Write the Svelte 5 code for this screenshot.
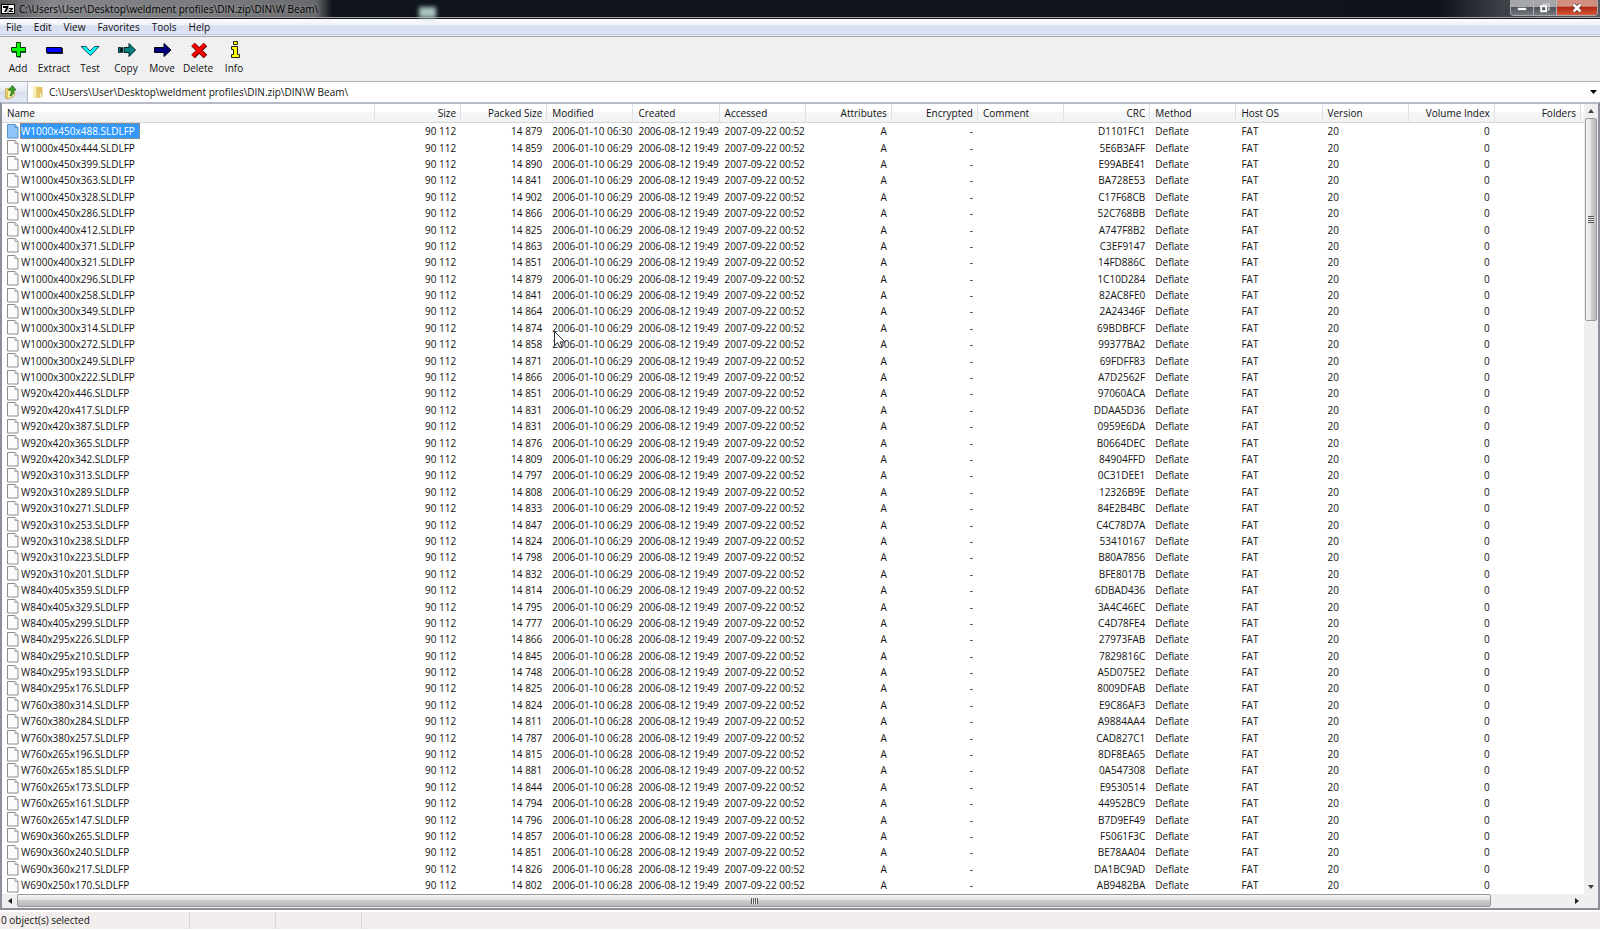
<script>
  const path = 'C:\\Users\\User\\Desktop\\weldment profiles\\DIN.zip\\DIN\\W Beam\\';
  const menus = ['File', 'Edit', 'View', 'Favorites', 'Tools', 'Help'];
  const tools = ['Add', 'Extract', 'Test', 'Copy', 'Move', 'Delete', 'Info'];

  const columns = [
    { label: 'Name' },
    { label: 'Size', right: true },
    { label: 'Packed Size', right: true },
    { label: 'Modified' },
    { label: 'Created' },
    { label: 'Accessed' },
    { label: 'Attributes', right: true },
    { label: 'Encrypted', right: true },
    { label: 'Comment' },
    { label: 'CRC', right: true },
    { label: 'Method' },
    { label: 'Host OS' },
    { label: 'Version' },
    { label: 'Volume Index', right: true },
    { label: 'Folders', right: true }
  ];

  // name | packed size | modified minute | CRC
  const files = `1000x450x488 879 30 D1101FC1
1000x450x444 859 29 5E6B3AFF
1000x450x399 890 29 E99ABE41
1000x450x363 841 29 BA728E53
1000x450x328 902 29 C17F68CB
1000x450x286 866 29 52C768BB
1000x400x412 825 29 A747F8B2
1000x400x371 863 29 C3EF9147
1000x400x321 851 29 14FD886C
1000x400x296 879 29 1C10D284
1000x400x258 841 29 82AC8FE0
1000x300x349 864 29 2A24346F
1000x300x314 874 29 69BDBFCF
1000x300x272 858 29 99377BA2
1000x300x249 871 29 69FDFF83
1000x300x222 866 29 A7D2562F
920x420x446 851 29 97060ACA
920x420x417 831 29 DDAA5D36
920x420x387 831 29 0959E6DA
920x420x365 876 29 B0664DEC
920x420x342 809 29 84904FFD
920x310x313 797 29 0C31DEE1
920x310x289 808 29 12326B9E
920x310x271 833 29 84E2B4BC
920x310x253 847 29 C4C78D7A
920x310x238 824 29 53410167
920x310x223 798 29 B80A7856
920x310x201 832 29 BFE8017B
840x405x359 814 29 6DBAD436
840x405x329 795 29 3A4C46EC
840x405x299 777 29 C4D78FE4
840x295x226 866 28 27973FAB
840x295x210 845 28 7829816C
840x295x193 748 28 A5D075E2
840x295x176 825 28 8009DFAB
760x380x314 824 28 E9C86AF3
760x380x284 811 28 A9884AA4
760x380x257 787 28 CAD827C1
760x265x196 815 28 8DF8EA65
760x265x185 881 28 0A547308
760x265x173 844 28 E9530514
760x265x161 794 28 44952BC9
760x265x147 796 28 B7D9EF49
690x360x265 857 28 F5061F3C
690x360x240 851 28 BE78AA04
690x360x217 826 28 DA1BC9AD
690x250x170 802 28 AB9482BA`
    .split('\n')
    .map((line) => {
      const [name, packed, minute, crc] = line.trim().split(' ');
      return [
        `W${name}.SLDLFP`, '90 112', `14 ${packed}`, `2006-01-10 06:${minute}`,
        '2006-08-12 19:49', '2007-09-22 00:52', 'A', '-', '', crc, 'Deflate', 'FAT', '20', '0', ''
      ];
    });
</script>

<div class="window">
  <header class="title">
    <svg class="logo" width="14" height="10" viewBox="0 0 14 10" aria-hidden="true">
      <rect width="14" height="10" fill="#000" /><rect x="1" y="1" width="12" height="8" fill="#fff" />
      <path d="M2 2h5v2l-2 4H3l2-4H2z" fill="#000" /><path d="M8 4h4v1l-2 2h2v1H8V7l2-2H8z" fill="#000" />
      <path d="M7 1v8" stroke="#000" stroke-width="0.6" />
    </svg>
    <h1>{path}</h1>
    <span class="spot"></span>
    <div class="controls">
      <button class="min" aria-label="Minimize">
        <svg width="12" height="10" viewBox="0 0 12 10"><rect x="1.5" y="4.5" width="9" height="3" fill="#fff" stroke="#555a66" stroke-width=".7" /></svg>
      </button>
      <button class="restore" aria-label="Restore">
        <svg width="12" height="10" viewBox="0 0 12 10"><path d="M4.500 2V1H10V7H9" fill="none" stroke="#d5d8dd" stroke-width="1.200" /><rect x="2.200" y="3.200" width="5" height="5" fill="#50545c" stroke="#fff" stroke-width="2" /></svg>
      </button>
      <button class="close" aria-label="Close">
        <svg width="12" height="10" viewBox="0 0 12 10"><path d="M2.500 1.500l7 7M9.500 1.500l-7 7" stroke="#5c2a25" stroke-width="4" /><path d="M2.500 1.500l7 7M9.500 1.500l-7 7" stroke="#fff" stroke-width="2.500" /></svg>
      </button>
    </div>
  </header>

  <nav class="menu">
    {#each menus as m}<button>{m}</button>{/each}
  </nav>

  <div class="toolbar">
    {#each tools as t}
      <button>
        <svg width="22" height="18" viewBox="0 0 22 18" aria-hidden="true">
          {#if t === 'Add'}
            <path d="M10 2.500h4V7h5v5h-5v4.500h-4V12H5V7h5z" fill="#063" /><path d="M9.500 1.500h4V6.500h5v4h-5v5h-4v-5h-5v-4h5z" fill="#0f0" stroke="#043804" />
          {:else if t === 'Extract'}
            <path d="M4 7h16v6H4z" fill="#223" /><path d="M3.500 6.500h15v5h-15z" fill="#00f" stroke="#001" />
          {:else if t === 'Test'}
            <path d="M2 5.500h5L11 10l4.500-4.500H20L11.500 14.500z" fill="#0ff" stroke="#134" stroke-width=".9" />
          {:else if t === 'Copy'}
            <path d="M3.500 6.500h2v5h-2zM6.500 6.500h1v5h-1zM9 6.500h5v-4l6.500 6.500-6.500 6.500v-4H9z" fill="#088080" stroke="#022" />
          {:else if t === 'Move'}
            <path d="M3.500 6.500H13v-4l7 6.500-7 6.500v-4H3.500z" fill="#000080" stroke="#001" />
          {:else if t === 'Delete'}
            <path d="M6 3.500L18.500 15.500M18.500 3.500L6 15.500" stroke="#400" stroke-width="5" /><path d="M6 3.500L18 15M18 3.500L6 15" stroke="#f00" stroke-width="3.600" />
          {:else}
            <path d="M10.500.5h4v3h-4zM8.500 5.500h6v8h2v3h-8v-3h2v-5h-2z" fill="#ff0" stroke="#221" />
          {/if}
        </svg>
        <span>{t}</span>
      </button>
    {/each}
  </div>

  <div class="address">
    <button class="up" aria-label="Up one level">
      <svg width="14" height="16" viewBox="0 0 14 16">
        <path d="M1.500 5l3-1 1 1 3-1v9l-5 2-2-1z" fill="#f3d978" stroke="#b99a3c" stroke-width=".8" />
        <path d="M3.500 7l7-2v7l-7 3z" fill="#fdf0a8" stroke="#c7a646" stroke-width=".7" />
        <path d="M6 12c4-1 4-4 3.500-6H12L8.500 1.500 4.500 6h2.500c.5 2 0 4-1 6z" fill="#3aa52e" stroke="#1c6d17" stroke-width=".8" />
      </svg>
    </button>
    <svg class="folder" width="12" height="14" viewBox="0 0 12 14" aria-hidden="true">
      <path d="M1 1h5l1 1v11H1z" fill="#f7e39b" /><path d="M6 2h4.500v10L6 13z" fill="#e5c25c" />
      <path d="M1 1h3.500v11L1 13z" fill="#fbeeb9" /><path d="M5 2.500v10" stroke="#cfa94a" stroke-width=".8" /><path d="M8.500 8v4.500" stroke="#f7f1d8" stroke-width="1.500" />
    </svg>
    <input aria-label="Path" value={path} />
    <button class="drop" aria-label="Path history"><svg width="7" height="4" viewBox="0 0 7 4"><path d="M0 0h7L3.500 4z" fill="#000" /></svg></button>
  </div>

  <main class="list">
    <div class="rows">
      <table>
        <colgroup>
          <col class="c-name" />
          {#each columns.slice(1) as _}<col />{/each}
          <col class="c-end" />
        </colgroup>
        <thead>
          <tr>
            {#each columns as c}<th class:right={c.right}>{c.label}</th>{/each}
            <td></td>
          </tr>
        </thead>
        <tbody>
          {#each files as f, i}
            <tr class:selected={i === 0}>
              {#each f as v, j}
                {#if j === 0}
                  <td class="name">
                    <div>
                      <svg width="12" height="15" viewBox="0 0 12 15" aria-hidden="true">
                        <path class="sheet" d="M.5.5h7.500l3 3V14H.5z" /><path class="fold" d="M8 .5v3h3" />
                      </svg>
                      <span>{v}</span>
                    </div>
                  </td>
                {:else}
                  <td class:right={columns[j].right}>{v}</td>
                {/if}
              {/each}
              <td></td>
            </tr>
          {/each}
        </tbody>
      </table>
    </div>

    <div class="vscroll">
      <button aria-label="Scroll up"><svg width="6" height="4" viewBox="0 0 6 4"><path d="M0 4h6L3 0z" fill="#444" /></svg></button>
      <div class="track"><div class="thumb"><i></i></div></div>
      <button aria-label="Scroll down"><svg width="6" height="4" viewBox="0 0 6 4"><path d="M0 0h6L3 4z" fill="#444" /></svg></button>
    </div>
    <div class="hscroll">
      <button aria-label="Scroll left"><svg width="4" height="6" viewBox="0 0 4 6"><path d="M4 0v6L0 3z" fill="#222" /></svg></button>
      <div class="track"><div class="thumb"><i></i></div></div>
      <button aria-label="Scroll right"><svg width="4" height="6" viewBox="0 0 4 6"><path d="M0 0v6L4 3z" fill="#222" /></svg></button>
    </div>
    <div class="corner"></div>
  </main>

  <footer class="status">
    <span class="wide">0 object(s) selected</span><span></span><span></span>
  </footer>

  <svg class="cursor" width="12" height="18" viewBox="0 0 12 18" aria-hidden="true">
    <path d="M.5.5v14l3-3 2.500 5 2-1-2-4.500H11z" fill="#fff" stroke="#333" />
  </svg>
</div>

<style>
  :global(body) { margin: 0; background: #fff; }
  * { box-sizing: border-box; }
  .window {
    position: relative;
    display: flex;
    flex-direction: column;
    height: 100vh;
    padding-bottom: 1px;
    overflow: hidden;
    background: #fff;
    color: #111;
    font: 10px/16px "Open Sans", "Noto Sans", sans-serif;
  }
  button { margin: 0; padding: 0; border: 0; background: none; color: inherit; font: inherit; }
  svg { display: block; flex: none; }

  .title {
    display: flex;
    align-items: center;
    gap: 4px;
    height: 19px;
    flex: none;
    border-bottom: 1px solid #15181d;
    box-shadow: inset 0 -1px #a4a5a7;
    background: linear-gradient(90deg, #55575a 0, #85868a 50px, #77787b 240px, #66686b 316px, #10141c 332px, #10131b 1440px, #3c3f45 1500px, #55585e 100%);
  }
  .logo { margin-left: 1px; }
  h1 { margin: 0; color: #000; font: inherit; text-shadow: 0 0 4px #aaa; }
  .spot { width: 17px; height: 11px; margin: 6px auto 0 97px; background: #a9c4c0; filter: blur(2px); }
  .controls { display: flex; align-self: flex-start; height: 16px; margin-right: 2px; border: 1px solid #a8a9ac; border-top: 0; border-radius: 0 0 4px 4px; overflow: hidden; }
  .controls button { display: grid; place-items: center; width: 23px; border-right: 1px solid #b2b3b5; background: linear-gradient(#a6a7aa 0 45%, #50535b 50%, #74777e); }
  .controls .close { width: 40px; border: 0; background: linear-gradient(#d28f80 0 40%, #b02a15 50%, #d9573b); }

  .menu { display: flex; flex: none; height: 18px; border-bottom: 1px solid #a5a8ae; background: linear-gradient(#fdfdfe 0, #eef1f8 35%, #d5dcee 42%, #e0e6f6 88%, #c5cadb 90%, #f4f5f9); }
  .menu button { padding: 0 6px; line-height: 17px; }

  .toolbar { display: flex; flex: none; height: 44px; padding-top: 4px; background: #f0f0f0; }
  .toolbar button { display: flex; flex-direction: column; align-items: center; width: 36px; }
  .toolbar span { margin-top: 1px; }

  .address { display: flex; align-items: center; flex: none; height: 21px; border-top: 1px solid #b0b3b8; background: #fff; }
  .up { display: grid; place-items: center; align-self: stretch; width: 28px; padding-right: 6px; border-right: 1px solid #b9bdc6; background: linear-gradient(#f6f8fc, #e6eaf5 45%, #d8deee 50%, #e4e9f6); }
  .folder { margin-left: 4px; }
  input { flex: 1; min-width: 0; height: 18px; margin-left: 5px; padding: 0; border: 0; outline: 0; background: none; color: inherit; font: inherit; }
  .drop { width: 13px; display: grid; place-items: center; height: 100%; }

  .list { display: grid; grid-template: minmax(0, 1fr) 14px / minmax(0, 1fr) 14px; flex: 1; min-height: 0; border: 2px solid #8a8f98; border-top-color: #b7bdc6; }
  .rows { overflow: hidden; }
  table { width: 100%; height: 100%; border-collapse: separate; border-spacing: 0; table-layout: fixed; }
  .c-name { width: 373px; }
  .c-end { width: 3px; }
  thead tr { height: 19px; }
  thead th, thead td { border-bottom: 1px solid #d5d5d5; background: linear-gradient(#fff 0 42%, #f5f6f8 46%, #f1f2f4); }
  th { padding: 0 4px 0 5px; border-right: 1px solid #dfe0e3; font-weight: 400; text-align: left; }
  td { padding: 0 5px; white-space: nowrap; }
  tbody tr td:last-child, thead td { padding: 0; }
  .right { text-align: right; }
  .name div { display: flex; align-items: center; gap: 1px; height: 16px; }
  .name span { padding: 0 5px 0 1px; }
  .sheet { fill: #fbfbfb; stroke: #8c8c8c; }
  .fold { fill: #ddd; stroke: #a5a5a5; }
  .selected .sheet { fill: #90c5fa; stroke: #5b8fc6; }
  .selected .fold { fill: #74b0ee; stroke: #5b8fc6; }
  .selected .name span { background: #3399ff; color: #fff; outline: 1px dotted #c97a4a; outline-offset: -1px; }

  .vscroll, .hscroll { display: flex; background: #efefef; }
  .vscroll { flex-direction: column; }
  .vscroll button, .hscroll button { display: grid; place-items: center; flex: none; }
  .vscroll button { height: 14px; }
  .hscroll button { width: 15px; }
  .track { flex: 1; }
  .thumb { display: grid; place-items: center; border: 1px solid #989898; border-radius: 2px; }
  .vscroll .thumb { height: 203px; margin: 0 1px; background: linear-gradient(90deg, #f5f5f5, #e4e4e4 45%, #cfcfcf 50%, #bdbdbd); }
  .hscroll .thumb { width: 95%; height: 13px; background: linear-gradient(#f5f5f5, #e2e2e2 45%, #cacaca 50%, #b9b9b9); }
  .vscroll i { width: 6px; height: 7px; background: repeating-linear-gradient(#555 0 1px, #eee 1px 2px); }
  .hscroll i { width: 7px; height: 6px; background: repeating-linear-gradient(90deg, #555 0 1px, #eee 1px 2px); }
  .corner { background: #efefef; }

  .status { display: flex; flex: none; height: 19px; border-top: 2px solid #fff; background: #f0edec; }
  .status span { width: 86px; border-right: 1px solid #d5d5d5; }
  .status .wide { width: 190px; padding-left: 1px; }

  .cursor { position: absolute; left: 554px; top: 331px; }
</style>
